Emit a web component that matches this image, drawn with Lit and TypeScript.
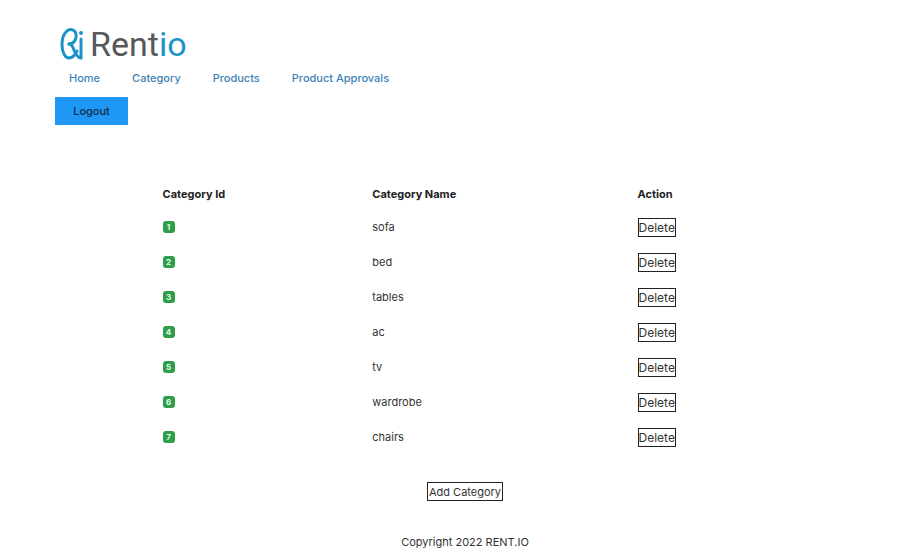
import { LitElement, html, css } from "lit";
import { customElement, state } from "lit/decorators.js";

interface Category {
  id: number;
  name: string;
}

@customElement("app-root")
export class AppRoot extends LitElement {
  static styles = css`
    :host {
      display: block;
      background: #fff;
      color: #333;
      font: 11px/16px Inter, "Liberation Sans", sans-serif;
    }
    header {
      display: flex;
      flex-direction: column;
      align-items: flex-start;
      padding: 24px 55px 0;
    }
    .brand {
      display: flex;
      align-items: flex-end;
      gap: 6px;
      height: 40px;
      padding-left: 5px;
      text-decoration: none;
      color: #58585a;
      font: 34px/40px Roboto, "Liberation Sans", sans-serif;
    }
    .brand svg {
      width: 24px;
      height: 34px;
      margin-bottom: 3px;
    }
    .accent {
      color: #1b93c6;
    }
    nav {
      display: flex;
      gap: 32px;
      padding: 6px 14px 0;
      font-weight: 500;
    }
    nav a {
      color: #3d82b4;
      text-decoration: none;
    }
    .logout {
      margin-top: 11px;
      width: 73px;
      height: 28px;
      padding: 0;
      border: 0;
      background: #1f97f4;
      color: #122c4c;
      font: inherit;
      font-weight: 500;
    }
    main,
    footer {
      padding-left: 18px;
    }
    main {
      display: flex;
      flex-direction: column;
      align-items: center;
      padding-top: 53px;
    }
    table {
      width: 69%;
      table-layout: fixed;
      border-collapse: collapse;
    }
    .col-id {
      width: 34%;
    }
    .col-name {
      width: 43%;
    }
    th,
    td {
      height: 35px;
      box-sizing: border-box;
      padding: 0 6px;
      text-align: left;
      vertical-align: middle;
    }
    th {
      height: 32px;
      color: #222;
      font-weight: 700;
    }
    td {
      padding-bottom: 2px;
    }
    td:last-child {
      padding-bottom: 0;
    }
    .badge {
      display: block;
      width: 12px;
      border-radius: 3px;
      background: #2f9e4b;
      color: #e4ffe9;
      font-size: 8px;
      line-height: 12px;
      font-weight: 700;
      text-align: center;
    }
    .outlined {
      display: block;
      height: 19px;
      padding: 0 1px;
      border: 1px solid #222;
      background: #fff;
      color: #333;
      font: inherit;
    }
    td .outlined {
      padding: 0;
      font-size: 12px;
    }
    .add {
      margin-top: 27px;
    }
    footer {
      padding-top: 33px;
      text-align: center;
    }
  `;

  @state() private categories: Category[] = [
    "sofa",
    "bed",
    "tables",
    "ac",
    "tv",
    "wardrobe",
    "chairs",
  ].map((name, i) => ({ id: i + 1, name }));

  private remove(id: number) {
    this.categories = this.categories.filter((c) => c.id !== id);
  }

  render() {
    return html`
      <header>
        <a class="brand" href="#" aria-label="Rentio">
          <svg viewBox="0 0 24 34" fill="none" stroke="#1b93c6" stroke-width="3" stroke-linecap="round" aria-hidden="true">
            <path d="M9 17C14 17 17 12 16 7C15 2 9 1 6 5C2 9 2 14 2 18C2 25 5 31 9 31C13 31 15 28 17 24" />
            <path d="M9 17C12 17 13 20 14 23C16 28 18 31 21 31V12" />
            <circle cx="21" cy="6" r="2" fill="#1b93c6" stroke="none" />
          </svg>
          <span>Rent<span class="accent">io</span></span>
        </a>
        <nav>
          <a href="#">Home</a>
          <a href="#">Category</a>
          <a href="#">Products</a>
          <a href="#">Product Approvals</a>
        </nav>
        <button class="logout">Logout</button>
      </header>
      <main>
        <table>
          <colgroup>
            <col class="col-id" />
            <col class="col-name" />
            <col />
          </colgroup>
          <thead>
            <tr>
              <th scope="col">Category Id</th>
              <th scope="col">Category Name</th>
              <th scope="col">Action</th>
            </tr>
          </thead>
          <tbody>
            ${this.categories.map(
              (c) => html`<tr>
                <td><span class="badge">${c.id}</span></td>
                <td>${c.name}</td>
                <td>
                  <button class="outlined" @click=${() => this.remove(c.id)}>Delete</button>
                </td>
              </tr>`
            )}
          </tbody>
        </table>
        <button class="outlined add">Add Category</button>
      </main>
      <footer>Copyright 2022 RENT.IO</footer>
    `;
  }
}
